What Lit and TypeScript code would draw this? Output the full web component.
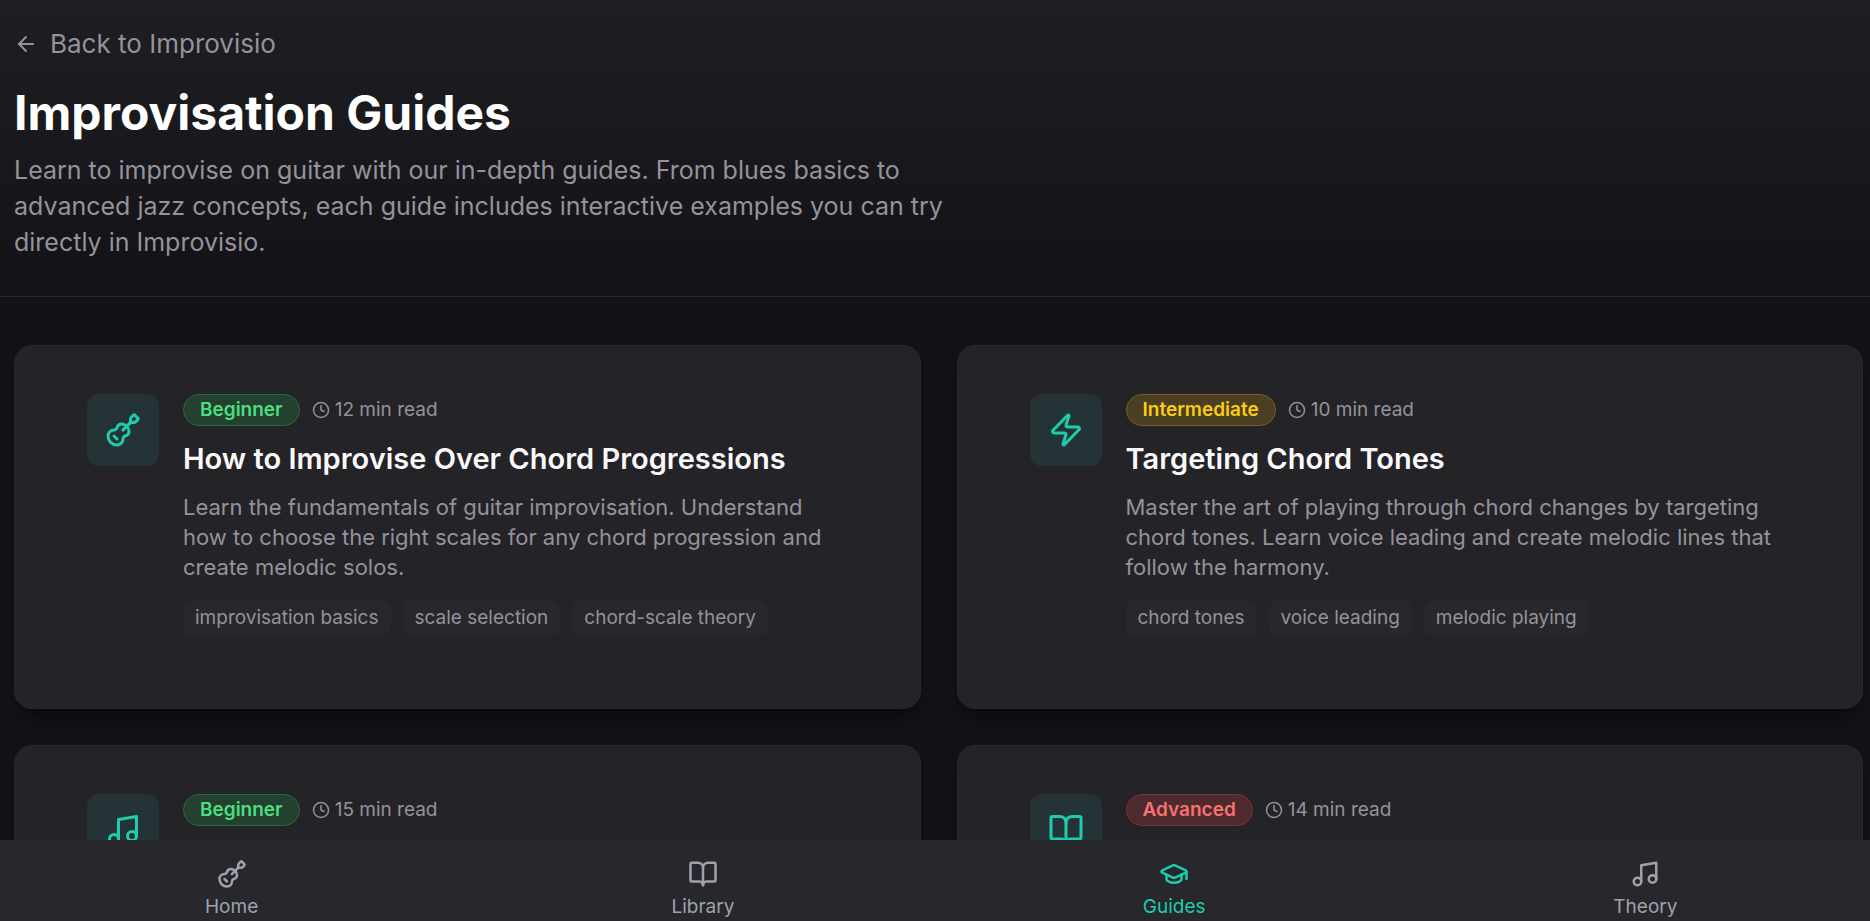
import { LitElement, html, css, svg, nothing } from "lit";
import type { SVGTemplateResult } from "lit";
import { customElement, property } from "lit/decorators.js";
import { classMap } from "lit/directives/class-map.js";

type IconName = "arrow" | "guitar" | "zap" | "music" | "book" | "cap" | "clock";
type Level = "Beginner" | "Intermediate" | "Advanced";

interface Guide {
  icon: IconName;
  level: Level;
  minutes: number;
  title?: string;
  text?: string;
  tags?: string[];
}

const ICONS: Record<IconName, SVGTemplateResult> = {
  arrow: svg`<path d="m12 19-7-7 7-7"/><path d="M19 12H5"/>`,
  guitar: svg`<path d="m11.9 12.1 4.514-4.514"/><path d="M20.1 2.3a1 1 0 0 0-1.4 0l-1.114 1.114A2 2 0 0 0 17 4.828v1.344a2 2 0 0 1-.586 1.414A2 2 0 0 1 17.828 7h1.344a2 2 0 0 0 1.414-.586L21.7 5.3a1 1 0 0 0 0-1.4z"/><path d="m6 16 2 2"/><path d="M8.23 9.85A3 3 0 0 1 11 8a5 5 0 0 1 5 5 3 3 0 0 1-1.85 2.77l-.92.38A2 2 0 0 0 12 18a4 4 0 0 1-4 4 6 6 0 0 1-6-6 4 4 0 0 1 4-4 2 2 0 0 0 1.85-1.23z"/>`,
  zap: svg`<path d="M4 14a1 1 0 0 1-.78-1.63l9.9-10.2a.5.5 0 0 1 .86.46l-1.92 6.02A1 1 0 0 0 13 10h7a1 1 0 0 1 .78 1.63l-9.9 10.2a.5.5 0 0 1-.86-.46l1.92-6.02A1 1 0 0 0 11 14z"/>`,
  music: svg`<path d="M9 18V5l12-2v13"/><circle cx="6" cy="18" r="3"/><circle cx="18" cy="16" r="3"/>`,
  book: svg`<path d="M12 7v14"/><path d="M3 18a1 1 0 0 1-1-1V4a1 1 0 0 1 1-1h5a4 4 0 0 1 4 4 4 4 0 0 1 4-4h5a1 1 0 0 1 1 1v13a1 1 0 0 1-1 1h-6a3 3 0 0 0-3 3 3 3 0 0 0-3-3z"/>`,
  cap: svg`<path d="M21.42 10.922a1 1 0 0 0-.019-1.838L12.83 5.18a2 2 0 0 0-1.66 0L2.6 9.08a1 1 0 0 0 0 1.832l8.57 3.908a2 2 0 0 0 1.66 0z"/><path d="M22 10v6"/><path d="M6 12.5V16a6 3 0 0 0 12 0v-3.5"/>`,
  clock: svg`<circle cx="12" cy="12" r="10"/><path d="M12 6v6l4 2"/>`,
};

const GUIDES: Guide[] = [
  {
    icon: "guitar",
    level: "Beginner",
    minutes: 12,
    title: "How to Improvise Over Chord Progressions",
    text: "Learn the fundamentals of guitar improvisation. Understand how to choose the right scales for any chord progression and create melodic solos.",
    tags: ["improvisation basics", "scale selection", "chord-scale theory"],
  },
  {
    icon: "zap",
    level: "Intermediate",
    minutes: 10,
    title: "Targeting Chord Tones",
    text: "Master the art of playing through chord changes by targeting chord tones. Learn voice leading and create melodic lines that follow the harmony.",
    tags: ["chord tones", "voice leading", "melodic playing"],
  },
  { icon: "music", level: "Beginner", minutes: 15 },
  { icon: "book", level: "Advanced", minutes: 14 },
];

const TABS: { icon: IconName; label: string; active?: boolean }[] = [
  { icon: "guitar", label: "Home" },
  { icon: "book", label: "Library" },
  { icon: "cap", label: "Guides", active: true },
  { icon: "music", label: "Theory" },
];

@customElement("line-icon")
class LineIcon extends LitElement {
  @property() name: IconName = "arrow";

  static styles = css`
    :host { display: block; flex: none; }
    .glyph {
      display: block;
      width: 100%;
      height: 100%;
      fill: none;
      stroke: currentColor;
      stroke-width: 2;
      stroke-linecap: round;
      stroke-linejoin: round;
    }
  `;

  render() {
    return html`<svg class="glyph" viewBox="0 0 24 24" aria-hidden="true">${ICONS[this.name]}</svg>`;
  }
}

@customElement("guide-card")
class GuideCard extends LitElement {
  @property({ attribute: false }) guide!: Guide;

  static styles = css`
    :host { display: block; }
    .card {
      box-sizing: border-box;
      height: 100%;
      display: flex;
      align-items: flex-start;
      gap: 24px;
      padding: 48px 72px;
      border: 1px solid #232a32;
      border-radius: 18px;
      background: #242327;
      box-shadow: 0 15px 22px -4px rgba(0, 0, 0, 0.3), 0 6px 9px -6px rgba(0, 0, 0, 0.3);
      color: inherit;
      text-decoration: none;
    }
    .tile {
      flex: none;
      display: grid;
      place-items: center;
      width: 72px;
      height: 72px;
      border-radius: 12px;
      background: #233336;
      color: #1dcdae;
    }
    .tile-icon { width: 36px; height: 36px; }
    .body { flex: 1; min-width: 0; }
    .meta { display: flex; align-items: center; gap: 12px; margin-bottom: 12px; }
    .badge {
      padding: 0 16px;
      border: 1px solid;
      border-radius: 16px;
      font-size: 19px;
      font-weight: 600;
      line-height: 30px;
    }
    .beginner { color: #4ade80; background: #24402f; border-color: #256b3e; }
    .intermediate { color: #facc15; background: #4a3f23; border-color: #79611a; }
    .advanced { color: #f87171; background: #4c2a2e; border-color: #7b3035; }
    .time {
      display: flex;
      align-items: center;
      gap: 5px;
      color: #94939b;
      font-size: 19px;
      line-height: 24px;
    }
    .time-icon { width: 18px; height: 18px; }
    .title {
      margin: 0 0 12px;
      color: #fafafa;
      font-size: 29px;
      font-weight: 600;
      line-height: 42px;
    }
    .text {
      margin: 0 0 18px;
      color: #94939b;
      font-size: 22px;
      line-height: 30px;
    }
    .tags {
      display: flex;
      flex-wrap: wrap;
      gap: 12px;
      margin: 0 0 24px;
      padding: 0;
      list-style: none;
    }
    .tag {
      padding: 0 12px;
      border-radius: 9px;
      background: #28272b;
      color: #94939b;
      font-size: 19px;
      line-height: 36px;
    }
  `;

  render() {
    const g = this.guide;
    return html`
      <a class="card" href="#guide">
        <div class="tile"><line-icon class="tile-icon" name=${g.icon}></line-icon></div>
        <div class="body">
          <div class="meta">
            <span class=${classMap({ badge: true, [g.level.toLowerCase()]: true })}>${g.level}</span>
            <span class="time"><line-icon class="time-icon" name="clock"></line-icon>${g.minutes} min read</span>
          </div>
          ${g.title ? html`<h2 class="title">${g.title}</h2>` : nothing}
          ${g.text ? html`<p class="text">${g.text}</p>` : nothing}
          ${g.tags ? html`<ul class="tags">${g.tags.map((t) => html`<li class="tag">${t}</li>`)}</ul>` : nothing}
        </div>
      </a>
    `;
  }
}

@customElement("app-root")
class AppRoot extends LitElement {
  static styles = css`
    :host {
      display: flex;
      flex-direction: column;
      height: 100vh;
      background: #131217;
      color: #94939b;
      font-family: Inter, "Open Sans", sans-serif;
    }
    .page { flex: 1; min-height: 0; overflow-y: auto; scrollbar-width: none; }
    .header {
      padding: 26px 14px 36px;
      border-bottom: 1px solid #1d2a38;
      background: linear-gradient(#1f1e22, #131217);
    }
    .back {
      display: inline-flex;
      align-items: center;
      gap: 12px;
      color: inherit;
      font-size: 26px;
      line-height: 36px;
      text-decoration: none;
    }
    .back-icon { width: 24px; height: 24px; }
    .heading {
      margin: 24px 0 12px;
      color: #fff;
      font-size: 48px;
      font-weight: 700;
      line-height: 54px;
    }
    .intro {
      max-width: 960px;
      margin: 0;
      font-size: 25px;
      line-height: 36px;
    }
    .guides {
      display: grid;
      grid-template-columns: repeat(auto-fit, minmax(min(100%, 640px), 1fr));
      grid-auto-rows: 1fr;
      gap: 36px;
      padding: 48px 7px 36px 14px;
    }
    .nav {
      border-top: 1px solid #1d2a38;
      background: #28272b;
      overflow: hidden;
    }
    .tabs {
      display: grid;
      grid-template-columns: repeat(4, 1fr);
      margin: 0 -11px 0 -4px;
      padding: 18px 0 2px;
    }
    .tab {
      display: flex;
      flex-direction: column;
      align-items: center;
      gap: 6px;
      color: #9ca3af;
      font-size: 19px;
      line-height: 24px;
      text-decoration: none;
    }
    .active { color: #1dcdae; }
    .tab-icon { width: 30px; height: 30px; }
  `;

  render() {
    return html`
      <main class="page">
        <header class="header">
          <a class="back" href="#home"><line-icon class="back-icon" name="arrow"></line-icon>Back to Improvisio</a>
          <h1 class="heading">Improvisation Guides</h1>
          <p class="intro">
            Learn to improvise on guitar with our in-depth guides. From blues basics to advanced jazz concepts, each
            guide includes interactive examples you can try directly in Improvisio.
          </p>
        </header>
        <section class="guides">${GUIDES.map((g) => html`<guide-card .guide=${g}></guide-card>`)}</section>
      </main>
      <nav class="nav">
        <div class="tabs">
          ${TABS.map(
            (t) => html`<a class=${classMap({ tab: true, active: !!t.active })} href="#${t.label.toLowerCase()}">
              <line-icon class="tab-icon" name=${t.icon}></line-icon>${t.label}
            </a>`,
          )}
        </div>
      </nav>
    `;
  }
}
